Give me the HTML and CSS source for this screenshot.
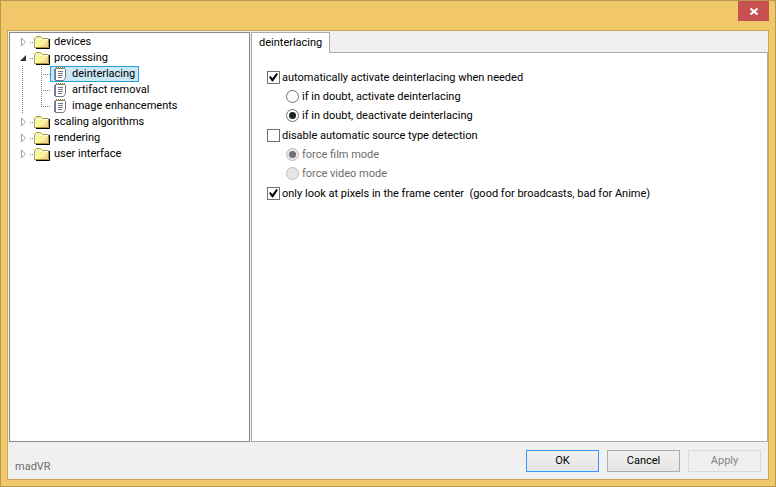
FILE: index.html
```html
<!DOCTYPE html>
<html lang="en">

<head>
    <meta charset="UTF-8">
    <meta name="viewport" content="width=device-width, initial-scale=1.0">
    <title>madVR</title>
    <link rel="stylesheet" href="styles.css">
</head>

<body>
    <!-- shared icons -->
    <svg class="icon-defs" aria-hidden="true">
        <symbol id="icon-closed" viewBox="0 0 7 10">
            <path d="M1.5 1 L5.5 5 L1.5 9 Z" fill="#fff" stroke="#a0a0a0" />
        </symbol>
        <symbol id="icon-open" viewBox="0 0 7 10">
            <path d="M6 2 V8 H0 Z" fill="#333" />
        </symbol>
        <symbol id="icon-folder" viewBox="0 0 16 14">
            <path d="M2 13.5 H15.5 V4" fill="none" stroke="#000" />
            <path d="M0.5 12.5 V3.5 L2.5 1.5 H6.5 L8.5 3.5 H14.5 V12.5 Z" fill="#f8f29c" stroke="#a59a3c" />
            <path d="M1.5 12 V4.5 H14" fill="none" stroke="#fffde0" />
            <path d="M13 6h1v6H7v-1h2v-1h2V8h2Z" fill="#f3cf9c" />
        </symbol>
        <symbol id="icon-page" viewBox="0 0 12 14">
            <path d="M1.5 1.5 H10.5 L11.5 2.5 V10.5 L9.5 13.5 H1.5 Z" fill="#fff" stroke="#777" />
            <path d="M0.5 2 V13" fill="none" stroke="#8080c8" />
            <path d="M4 4.5h5M4 6.5h5M4 8.5h5M4 10.5h4" stroke="#777" />
            <path d="M2 0.5h1M4 0.5h1M6 0.5h1M8 0.5h1M10 0.5h1" stroke="#9c6a28" />
            <path d="M2 1.5h9" stroke="#a89068" stroke-dasharray="1 1" />
        </symbol>
    </svg>

    <div class="window">
        <div class="title-bar">
            <button type="button" class="close-button" aria-label="Close">
                <svg width="8" height="7" viewBox="0 0 8 7">
                    <path d="M0.5 0.5 L7.5 6.5 M7.5 0.5 L0.5 6.5" stroke="#fff" stroke-width="2" />
                </svg>
            </button>
        </div>

        <form class="client">
            <div class="panels">
                <ul class="tree">
                    <li>
                        <div class="tree-row">
                            <button type="button" class="toggle" aria-label="Expand devices"><svg class="arrow"><use href="#icon-closed" /></svg></button>
                            <svg class="folder"><use href="#icon-folder" /></svg>
                            <a href="#devices">devices</a>
                        </div>
                    </li>
                    <li>
                        <div class="tree-row">
                            <button type="button" class="toggle" aria-label="Collapse processing"><svg class="arrow"><use href="#icon-open" /></svg></button>
                            <svg class="folder"><use href="#icon-folder" /></svg>
                            <a href="#processing">processing</a>
                        </div>
                        <ul class="children">
                            <li><a class="leaf selected" href="#deinterlacing"><svg class="page"><use href="#icon-page" /></svg>deinterlacing</a></li>
                            <li><a class="leaf" href="#artifact"><svg class="page"><use href="#icon-page" /></svg>artifact removal</a></li>
                            <li><a class="leaf" href="#enhancements"><svg class="page"><use href="#icon-page" /></svg>image enhancements</a></li>
                        </ul>
                    </li>
                    <li>
                        <div class="tree-row">
                            <button type="button" class="toggle" aria-label="Expand scaling algorithms"><svg class="arrow"><use href="#icon-closed" /></svg></button>
                            <svg class="folder"><use href="#icon-folder" /></svg>
                            <a href="#scaling">scaling algorithms</a>
                        </div>
                    </li>
                    <li>
                        <div class="tree-row">
                            <button type="button" class="toggle" aria-label="Expand rendering"><svg class="arrow"><use href="#icon-closed" /></svg></button>
                            <svg class="folder"><use href="#icon-folder" /></svg>
                            <a href="#rendering">rendering</a>
                        </div>
                    </li>
                    <li>
                        <div class="tree-row">
                            <button type="button" class="toggle" aria-label="Expand user interface"><svg class="arrow"><use href="#icon-closed" /></svg></button>
                            <svg class="folder"><use href="#icon-folder" /></svg>
                            <a href="#interface">user interface</a>
                        </div>
                    </li>
                </ul>

                <div class="settings">
                    <button type="button" class="tab">deinterlacing</button>
                    <div class="tab-page">
                        <div class="option-group">
                            <div class="option">
                                <input type="checkbox" id="autoActivate" checked>
                                <label for="autoActivate">automatically activate deinterlacing when needed</label>
                            </div>
                            <div class="option sub">
                                <input type="radio" id="doubtOn" name="doubt">
                                <label for="doubtOn">if in doubt, activate deinterlacing</label>
                            </div>
                            <div class="option sub">
                                <input type="radio" id="doubtOff" name="doubt" checked>
                                <label for="doubtOff">if in doubt, deactivate deinterlacing</label>
                            </div>
                        </div>
                        <div class="option-group">
                            <div class="option">
                                <input type="checkbox" id="disableDetection">
                                <label for="disableDetection">disable automatic source type detection</label>
                            </div>
                            <div class="option sub">
                                <input type="radio" id="filmMode" name="mode" checked disabled>
                                <label for="filmMode">force film mode</label>
                            </div>
                            <div class="option sub">
                                <input type="radio" id="videoMode" name="mode" disabled>
                                <label for="videoMode">force video mode</label>
                            </div>
                        </div>
                        <div class="option-group">
                            <div class="option">
                                <input type="checkbox" id="frameCenter" checked>
                                <label for="frameCenter">only look at pixels in the frame center &nbsp;(good for broadcasts, bad for Anime)</label>
                            </div>
                        </div>
                    </div>
                </div>
            </div>

            <div class="footer">
                <span class="product">madVR</span>
                <button type="submit" class="push-button default">OK</button>
                <button type="button" class="push-button">Cancel</button>
                <button type="button" class="push-button" disabled>Apply</button>
            </div>
        </form>
    </div>
</body>

</html>
```
FILE: styles.css
```css
* {
    box-sizing: border-box;
}

body {
    margin: 0;
    font-family: Tahoma, Roboto, sans-serif;
    font-size: 11px;
    line-height: 16px;
    color: #000;
}

button {
    font: inherit;
    color: inherit;
}

a {
    color: inherit;
    text-decoration: none;
}

ul {
    list-style: none;
    margin: 0;
    padding: 0;
}

.icon-defs {
    display: none;
}

.window {
    display: flex;
    flex-direction: column;
    height: 100vh;
    padding: 0 6px 6px;
    background-color: #f0c869;
    border: 1px solid #b8984f;
}

.title-bar {
    display: flex;
    justify-content: flex-end;
    height: 29px;
}

.close-button {
    display: flex;
    align-items: center;
    justify-content: center;
    width: 31px;
    height: 20px;
    padding: 0;
    border: none;
    background-color: #c75050;
}

.client {
    flex: 1;
    display: flex;
    flex-direction: column;
    background-color: #f0f0f0;
    border: 1px solid #cba654;
}

.panels {
    flex: 1;
    display: flex;
    gap: 1px;
    padding: 1px 0 0 1px;
}

/* tree */

.tree {
    width: 241px;
    padding: 1px 10px;
    background-color: #fff;
    border: 1px solid #828790;
}

.tree-row {
    display: flex;
    align-items: center;
    height: 16px;
}

.toggle {
    display: flex;
    width: 14px;
    padding: 0;
    border: none;
    background: repeating-linear-gradient(to right, #808080 0 1px, transparent 1px 2px) right center / 4px 1px no-repeat;
}

.arrow {
    width: 7px;
    height: 10px;
}

.folder {
    width: 16px;
    height: 14px;
    margin-right: 4px;
}

.children {
    padding-left: 21px;
    background: repeating-linear-gradient(#808080 0 1px, transparent 1px 2px) 2px 0 / 1px 100% no-repeat;
}

.children li {
    display: flex;
    padding-left: 9px;
    background:
        repeating-linear-gradient(#808080 0 1px, transparent 1px 2px) 0 0 / 1px 100% no-repeat,
        repeating-linear-gradient(to right, #808080 0 1px, transparent 1px 2px) 0 center / 9px 1px no-repeat;
}

.children li:last-child {
    background-size: 1px 50%, 9px 1px;
}

.leaf {
    display: flex;
    align-items: center;
    height: 16px;
    padding: 0 3px;
    border: 1px solid transparent;
}

.leaf.selected {
    background-color: #cbe8f6;
    border-color: #26a0da;
}

.page {
    width: 12px;
    height: 14px;
    margin-right: 6px;
}

/* settings */

.settings {
    flex: 1;
    display: flex;
    flex-direction: column;
    align-items: flex-start;
}

.tab {
    z-index: 1;
    height: 21px;
    margin-bottom: -1px;
    padding: 0 7px;
    background-color: #fff;
    border: 1px solid #acacac;
    border-bottom: none;
}

.tab-page {
    flex: 1;
    align-self: stretch;
    padding: 15px;
    background-color: #fff;
    border: 1px solid #acacac;
}

.option-group {
    margin-bottom: 1px;
}

.option {
    display: flex;
    align-items: center;
    gap: 2px;
    height: 19px;
}

.option.sub {
    padding-left: 19px;
    gap: 3px;
}

.option input {
    appearance: none;
    display: flex;
    align-items: center;
    justify-content: center;
    width: 13px;
    height: 13px;
    margin: 0;
    background-color: #fff;
    border: 1px solid #707070;
}

.option input[type="radio"] {
    border-radius: 50%;
}

.option input[type="checkbox"]:checked::before {
    content: "";
    width: 9px;
    height: 9px;
    background-color: #000;
    clip-path: polygon(0 45%, 16% 32%, 38% 58%, 82% 0, 100% 12%, 44% 94%, 34% 94%);
}

.option input[type="radio"]:checked::before {
    content: "";
    width: 7px;
    height: 7px;
    border-radius: 50%;
    background-color: #212121;
}

.option input:disabled {
    background-color: #e6e6e6;
    border-color: #bcbcbc;
}

.option input[type="radio"]:disabled:checked::before {
    background-color: #707070;
}

.option input:disabled + label {
    color: #6d6d6d;
}

/* footer */

.footer {
    display: flex;
    align-items: flex-start;
    gap: 8px;
    padding: 8px 7px 4px;
}

.product {
    flex: 1;
    padding-top: 9px;
    color: #6d6d6d;
}

.push-button {
    width: 73px;
    height: 22px;
    padding: 0;
    background: linear-gradient(#f0f0f0, #e5e5e5);
    border: 1px solid #acacac;
}

.push-button.default {
    border-color: #3399ff;
}

.push-button:disabled {
    color: #838383;
    background: #efefef;
    border-color: #d9d9d9;
}
```
